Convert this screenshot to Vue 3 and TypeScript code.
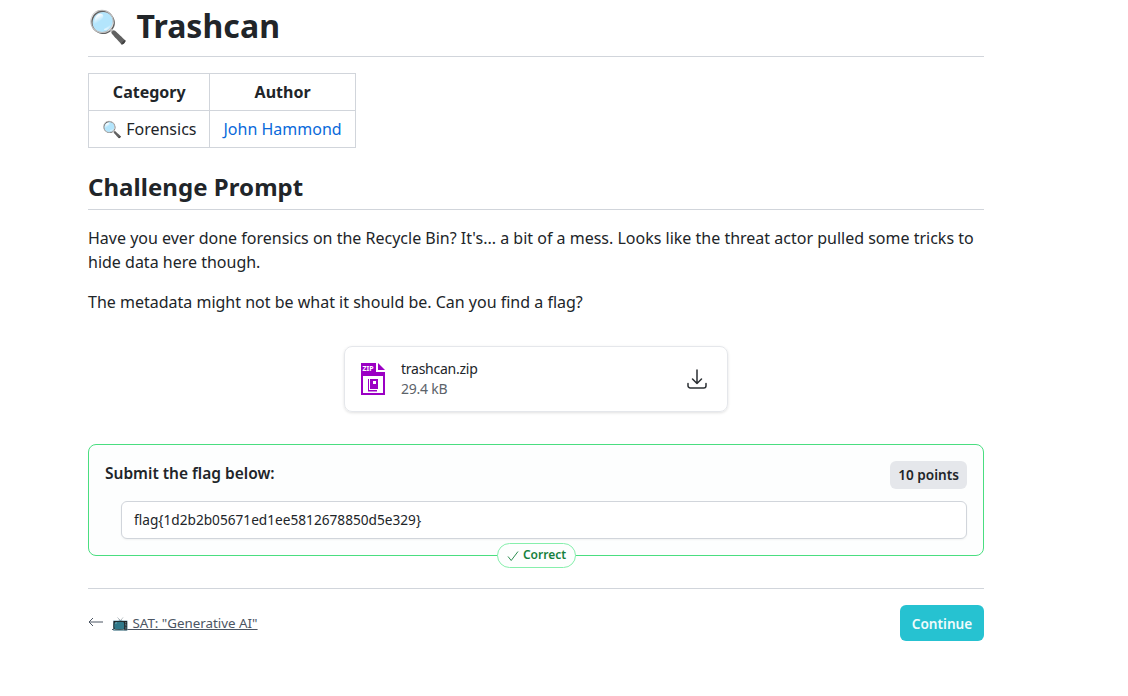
<script setup lang="ts">
const flag = "flag{1d2b2b05671ed1ee5812678850d5e329}";
</script>

<template>
  <div class="page">
    <h1 class="title">🔍 Trashcan</h1>
    <table class="meta">
      <thead>
        <tr><th>Category</th><th>Author</th></tr>
      </thead>
      <tbody>
        <tr><td>🔍 Forensics</td><td><a class="author">John Hammond</a></td></tr>
      </tbody>
    </table>
    <h2 class="section">Challenge Prompt</h2>
    <p class="para">Have you ever done forensics on the Recycle Bin? It's... a bit of a mess. Looks like the threat actor pulled some tricks to hide data here though.</p>
    <p class="para">The metadata might not be what it should be. Can you find a flag?</p>
    <div class="file-wrap">
      <div class="file">
        <svg class="zip" width="24" height="32" viewBox="0 0 24 32">
          <path d="M0 0H15V9H24V32H0Z M2 13V30H22V13Z" fill="#9b00c4" fill-rule="evenodd"/>
          <path d="M17 0L24 7H17Z" fill="#9b00c4"/>
          <path d="M9 16H17V26H9Z M7 16H8V28H7Z M7 27H16V28.5H7Z" fill="#9b00c4"/>
          <path d="M12 18H15V21H12Z" fill="#fff"/>
          <text x="1.5" y="7.5" class="zip-text">ZIP</text>
        </svg>
        <div class="file-info">
          <div class="file-name">trashcan.zip</div>
          <div class="file-size">29.4 kB</div>
        </div>
        <svg class="dl" width="24" height="24" viewBox="0 0 24 24" fill="none" stroke="#2b2f33" stroke-width="1.5" stroke-linecap="round" stroke-linejoin="round">
          <path d="M3 16.5v2.25A2.25 2.25 0 0 0 5.25 21h13.5A2.25 2.25 0 0 0 21 18.75V16.5M16.5 12 12 16.5m0 0L7.5 12m4.5 4.5V3"/>
        </svg>
      </div>
    </div>
    <div class="flag-box">
      <div class="flag-head">
        <span class="flag-label">Submit the flag below:</span>
        <span class="points">10 points</span>
      </div>
      <div class="flag-input">{{ flag }}</div>
      <span class="correct">
        <svg width="12" height="12" viewBox="0 0 12 12" fill="none" stroke="#15803d" stroke-width="0.9">
          <path d="M1 6.5 4.2 10.5 11 1.5"/>
        </svg>
        <span class="correct-text">Correct</span>
      </span>
    </div>
    <div class="nav">
      <div class="prev">
        <svg class="arrow" width="16" height="10" viewBox="0 0 16 10" fill="none" stroke="#4b5563" stroke-width="1">
          <path d="M15 5H1M5 1 1 5 5 9"/>
        </svg>
        <a class="prev-link">📺 SAT: "Generative AI"</a>
      </div>
      <button class="continue">Continue</button>
    </div>
  </div>
</template>

<style>
body { background: #ffffff; }
</style>

<style scoped>
.page {
  width: 896px;
  margin-left: 88px;
  font-family: "Noto Sans", sans-serif;
  font-size: 16px;
  line-height: 24px;
  color: #212529;
}
.title {
  margin: 0;
  height: 57px;
  box-sizing: border-box;
  font-size: 32px;
  line-height: 52px;
  font-weight: 700;
  letter-spacing: 0.07px;
  border-bottom: 1px solid #d1d5db;
}
.meta {
  margin-top: 16px;
  border-collapse: collapse;
}
.meta th, .meta td {
  border: 1px solid #d1d5db;
  padding: 6px 13px;
  text-align: center;
  font-size: 16px;
  line-height: 24px;
}
.author { color: #0969da; }
.section {
  margin: 24px 0 0;
  height: 37px;
  font-size: 24px;
  line-height: 30px;
  font-weight: 700;
  letter-spacing: 0.05px;
  border-bottom: 1px solid #d1d5db;
}
.para { margin: 16px 0 0; }
.file-wrap { display: flex; justify-content: center; margin-top: 32px; }
.file {
  width: 384px;
  height: 66px;
  box-sizing: border-box;
  border: 1px solid #e5e7eb;
  border-radius: 8px;
  box-shadow: 0 1px 3px rgba(0,0,0,.12);
  display: flex;
  align-items: center;
  padding: 0 18px 0 16px;
}
.zip { flex: none; }
.zip-text { font-family: "Noto Sans", sans-serif; font-size: 7px; font-weight: 700; fill: #fff; }
.file-info { margin-left: 16px; flex: 1; font-size: 14px; line-height: 20px; letter-spacing: -0.25px; }
.file-name { margin-top: -1px; }
.file-size { color: #5c636a; }
.flag-box {
  position: relative;
  margin-top: 32px;
  height: 112px;
  box-sizing: border-box;
  border: 1px solid #4ade80;
  border-radius: 8px;
  background: #fdfefe;
  padding: 16px;
}
.flag-head { display: flex; justify-content: space-between; align-items: center; height: 28px; }
.flag-label { font-weight: 600; font-size: 15.5px; margin-top: -5px; }
.points {
  background: #e5e7eb;
  border-radius: 6px;
  padding: 2px 8px;
  font-size: 13.6px;
  font-weight: 600;
}
.flag-input {
  margin: 12px 0 0 16px;
  height: 38px;
  box-sizing: border-box;
  border: 1px solid #d1d5db;
  border-radius: 6px;
  background: #fff;
  padding: 6px 12px;
  font-size: 13.67px;
  box-shadow: 0 1px 2px rgba(0,0,0,.05);
}
.correct {
  position: absolute;
  left: 408px;
  bottom: -13px;
  height: 25px;
  width: 79px;
  box-sizing: border-box;
  display: flex;
  align-items: center;
  justify-content: center;
  gap: 4px;
  border: 1px solid #86efac;
  border-radius: 13px;
  background: #fdfefe;
  color: #15803d;
  font-size: 12px;
  font-weight: 600;
}
.correct-text { margin-top: -2px; }
.nav {
  margin-top: 32px;
  border-top: 1px solid #d1d5db;
  padding-top: 16px;
  display: flex;
  justify-content: space-between;
  align-items: center;
}
.prev { display: flex; align-items: center; gap: 8px; }
.arrow { flex: none; margin-top: -2px; }
.prev-link { font-size: 13.35px; text-decoration: underline; color: #4b5563; }
.continue {
  width: 84px;
  height: 36px;
  border: none;
  border-radius: 6px;
  background: #26c2d1;
  color: #f0fbfc;
  font-family: inherit;
  font-size: 13.6px;
  font-weight: 600;
}
</style>
